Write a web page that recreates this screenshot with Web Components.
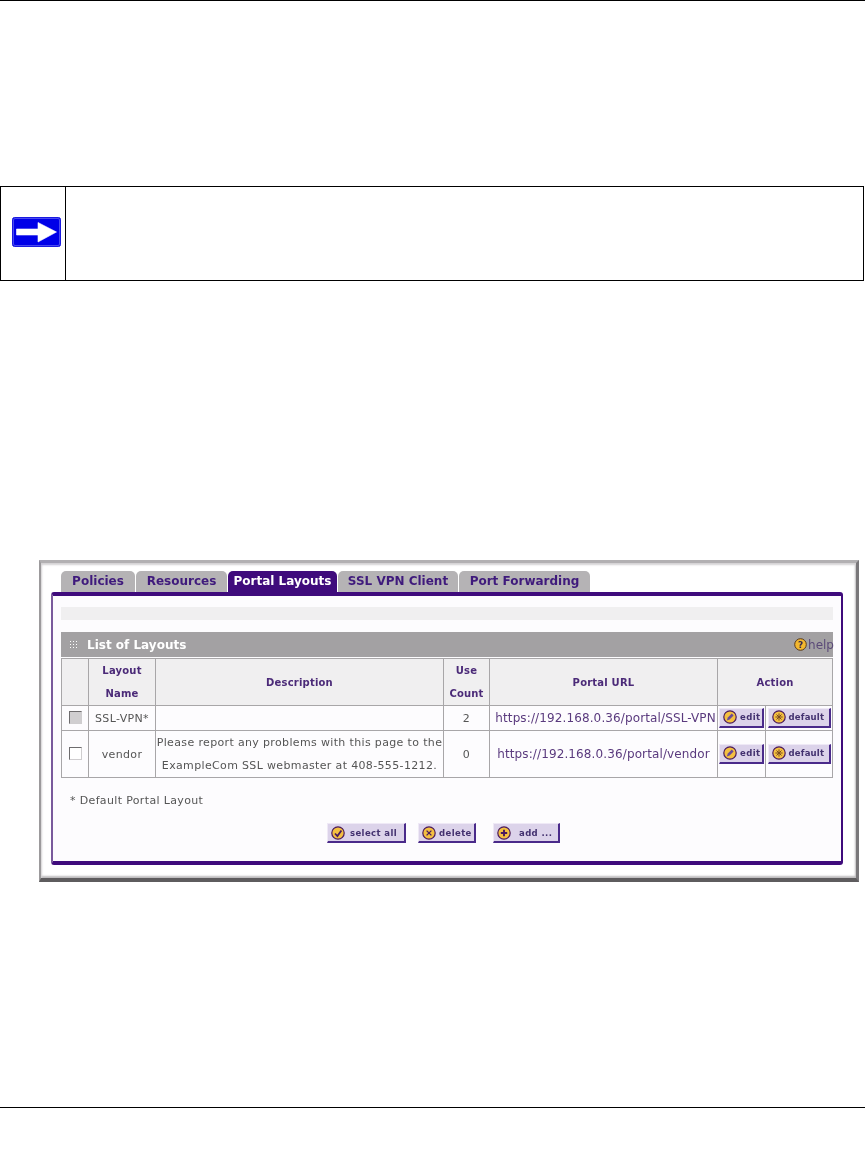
<!DOCTYPE html>
<html>
<head>
<meta charset="utf-8">
<title>Portal Layouts</title>
<style>
  html, body { margin: 0; padding: 0; background: #fff; }
</style>
</head>
<body>
<manual-page>
  <note-box></note-box>
  <vpn-window>
    <vpn-tab slot="tabs" style="width:74px">Policies</vpn-tab>
    <vpn-tab slot="tabs" style="width:91px">Resources</vpn-tab>
    <vpn-tab slot="tabs" style="width:109px" active>Portal Layouts</vpn-tab>
    <vpn-tab slot="tabs" style="width:120px">SSL VPN Client</vpn-tab>
    <vpn-tab slot="tabs" style="width:131px">Port Forwarding</vpn-tab>
    <layout-table></layout-table>
  </vpn-window>
</manual-page>

<script>
const ICONS = {
  check: `<path d="M4 7.5l2.4 2.6L10.4 4.4" fill="none" stroke="#4a1a5e" stroke-width="1.8"/>`,
  cross: `<path d="M4.6 4.6l4.8 4.8M9.4 4.6l-4.8 4.8" fill="none" stroke="#4a1a5e" stroke-width="1.3"/>`,
  plus: `<path d="M7 3.8v6.4M3.8 7h6.4" fill="none" stroke="#4a1a5e" stroke-width="1.9"/>`,
  pencil: `<path d="M3.8 10.4l1-2.8 4-4 1.8 1.8-4 4z" fill="#6a4a96"/>`,
  star: `<path d="M7 3.4v7.2M3.4 7h7.2M4.5 4.5l5 5M9.5 4.5l-5 5" fill="none" stroke="#7a4a20" stroke-width="1"/>`,
};

class ManualPage extends HTMLElement {
  constructor() {
    super();
    const shadow = this.attachShadow({ mode: "open" });
    shadow.innerHTML = `
      <style>
        :host { display: block; width: 865px; height: 1170px; overflow: hidden; background: #fff; }
        .top { height: 1px; background: #000; }
        .body { height: 1106px; padding-top: 185px; box-sizing: border-box; }
        .rule { height: 1px; background: #000; }
        ::slotted(vpn-window) { margin: 279px 0 0 39px; }
      </style>
      <div class="top"></div>
      <div class="body"><slot></slot></div>
      <div class="rule"></div>
    `;
  }
}

class NoteBox extends HTMLElement {
  constructor() {
    super();
    const shadow = this.attachShadow({ mode: "open" });
    shadow.innerHTML = `
      <style>
        :host { display: flex; width: 864px; height: 95px; box-sizing: border-box; border: 1px solid #000; }
        .icon { width: 65px; border-right: 1px solid #000; display: flex; align-items: center; padding-left: 11px; padding-bottom: 3px; box-sizing: border-box; }
        svg { display: block; }
      </style>
      <div class="icon">
        <svg width="49" height="30" viewBox="0 0 49 30">
          <rect x="0.5" y="0.5" width="48" height="29" rx="2" fill="#0000e8" stroke="#1a1ae0"/>
          <rect x="1.5" y="1.5" width="46" height="27" rx="1.5" fill="none" stroke="#6a6af4" stroke-width="0.7"/>
          <path d="M4.5 12H26V5.5L44.5 15 26 25V18H4.5z" fill="#fff" stroke="#fff" stroke-width="0.6" stroke-linejoin="round"/>
        </svg>
      </div>
    `;
  }
}

class VpnWindow extends HTMLElement {
  constructor() {
    super();
    const shadow = this.attachShadow({ mode: "open" });
    shadow.innerHTML = `
      <style>
        :host {
          display: block; width: 820px; height: 322px; box-sizing: border-box;
          padding: 8px 13px 13px 10px;
          border-style: solid; border-width: 3px 3px 4px 2px;
          border-color: #b2b0b2 #79777a #5e5c5e #9c9a9c;
          box-shadow: inset 1px 2px 2px #d4d2d4, inset -1px -2px 2px #bdbbbd;
          background: #fff;
          font-family: "DejaVu Sans", Verdana, sans-serif;
          filter: blur(0.35px);
        }
        .tabs { display: flex; gap: 1px; padding-left: 10px; height: 21px; }
        .panel {
          height: 273px; box-sizing: border-box;
          border-top: 4px solid #3f0b7c; border-bottom: 4px solid #3f0b7c;
          border-left: 2px solid #7a5a9c; border-right: 2px solid #3f0b7c;
          border-radius: 3px;
          background: #fdfcfe;
          padding: 11px 8px 0;
        }
      </style>
      <div class="tabs"><slot name="tabs"></slot></div>
      <div class="panel"><slot></slot></div>
    `;
  }
}

class VpnTab extends HTMLElement {
  constructor() {
    super();
    const shadow = this.attachShadow({ mode: "open" });
    shadow.innerHTML = `
      <style>
        :host {
          display: block; height: 21px; box-sizing: border-box; text-align: center;
          border-radius: 5px 5px 0 0;
          background: #b5b3b5; color: #3f1a7c;
          font: bold 12px/20px "DejaVu Sans", Verdana, sans-serif;
          white-space: nowrap;
        }
        :host([active]) { background: #3f0b7c; color: #fff; }
      </style>
      <slot></slot>
    `;
  }
}

class VpnButton extends HTMLElement {
  constructor() {
    super();
    const shadow = this.attachShadow({ mode: "open" });
    const icon = ICONS[this.getAttribute("icon")] || "";
    shadow.innerHTML = `
      <style>
        :host {
          display: inline-flex; align-items: center; height: 20px; box-sizing: border-box;
          padding-left: 3px; gap: 3px;
          background: #dcd3ea; color: #43316f;
          border-right: 2px solid #4a2a8a; border-bottom: 2px solid #4a2a8a;
          border-top: 1px solid #efe9f6; border-left: 1px solid #efe9f6;
          font: bold 8.5px/16px "DejaVu Sans", Verdana, sans-serif;
          letter-spacing: 0.4px; white-space: nowrap;
        }
        svg { display: block; flex: none; }
      </style>
      <svg width="14" height="14" viewBox="0 0 14 14">
        <circle cx="7" cy="7" r="6.2" fill="#f4c040" stroke="#4a1a5e" stroke-width="1.2"/>
        ${icon}
      </svg>
      <slot></slot>
    `;
  }
}

class LayoutTable extends HTMLElement {
  constructor() {
    super();
    const shadow = this.attachShadow({ mode: "open" });
    shadow.innerHTML = `
      <style>
        :host { display: block; color: #555; font: 11px "DejaVu Sans", Verdana, sans-serif; letter-spacing: 0.35px; }
        .msg { height: 13px; background: #f0eff0; margin-bottom: 12px; }
        .bar {
          height: 25px; display: flex; align-items: center; background: #a3a1a3; color: #fff;
          font: bold 12px "DejaVu Sans", Verdana, sans-serif; letter-spacing: 0; padding-left: 8px; margin-bottom: 1px;
        }
        .grip { width: 9px; height: 9px; margin-right: 9px; flex: none;
          background: radial-gradient(circle, #fff 0.8px, transparent 0.9px) 0 0 / 3px 3px; }
        .help { margin-left: auto; display: flex; align-items: center; gap: 1px; color: #5b4a78; font: 12px "DejaVu Sans", Verdana, sans-serif; margin-right: -1px; }
        .help svg { display: block; }
        table { border-collapse: collapse; table-layout: fixed; width: 771px; }
        th, td { border: 1px solid #a8a6a8; padding: 0; text-align: center; }
        th { background: #f0eff0; color: #4b2a78; font-size: 10px; font-weight: bold; line-height: 23px; height: 46px; letter-spacing: 0.2px; }
        td { line-height: 23px; }
        tr.r1 td { height: 24px; }
        tr.r2 td { height: 46px; }
        .url { color: #5a3a7e; font-size: 12px; letter-spacing: 0.12px; white-space: nowrap; }
        .url.shift { padding-left: 4px; }
        .desc { white-space: nowrap; }
        .box { display: block; width: 11px; height: 11px; margin: -1px auto 0; background: #fff;
          border: 1px solid; border-color: #6e6c6e #cfcdcf #cfcdcf #6e6c6e; }
        .box.off { background: #d0ced0; }
        .act { display: flex; justify-content: center; margin-top: -1px; }
        .tight { letter-spacing: 0.2px; }
        .foot { margin-top: 16px; height: 14px; line-height: 14px; padding-left: 9px; }
        .btns { display: flex; justify-content: center; gap: 12px; margin-top: 15px; padding-right: 7px; }
        .gap-add { margin-left: 5px; }
      </style>
      <div class="msg"></div>
      <div class="bar">
        <span class="grip"></span>List of Layouts
        <span class="help">
          <svg width="13" height="13" viewBox="0 0 13 13">
            <circle cx="6.5" cy="6.5" r="5.8" fill="#f4b82e" stroke="#5a3a1a"/>
            <text x="6.5" y="10" text-anchor="middle" font-size="9" font-weight="bold" fill="#3a2a4a" font-family="DejaVu Sans">?</text>
          </svg>help
        </span>
      </div>
      <table>
        <colgroup><col style="width:27px"><col style="width:67px"><col style="width:288px"><col style="width:46px"><col style="width:228px"><col style="width:48px"><col style="width:67px"></colgroup>
        <tr><th></th><th>Layout<br>Name</th><th>Description</th><th>Use<br>Count</th><th>Portal URL</th><th colspan="2">Action</th></tr>
        <tr class="r1">
          <td><span class="box off"></span></td><td>SSL-VPN*</td><td></td><td>2</td>
          <td class="url shift">https://192.168.0.36/portal/SSL-VPN</td>
          <td><div class="act"><vpn-button icon="pencil" style="width:45px">edit</vpn-button></div></td>
          <td><div class="act"><vpn-button class="tight" icon="star" style="width:63px">default</vpn-button></div></td>
        </tr>
        <tr class="r2">
          <td><span class="box"></span></td><td>vendor</td>
          <td class="desc">Please report any problems with this page to the<br>ExampleCom SSL webmaster at 408-555-1212.</td>
          <td>0</td>
          <td class="url">https://192.168.0.36/portal/vendor</td>
          <td><div class="act"><vpn-button icon="pencil" style="width:45px">edit</vpn-button></div></td>
          <td><div class="act"><vpn-button class="tight" icon="star" style="width:63px">default</vpn-button></div></td>
        </tr>
      </table>
      <div class="foot">* Default Portal Layout</div>
      <div class="btns">
        <vpn-button icon="check" style="width:79px;gap:5px">select all</vpn-button>
        <vpn-button icon="cross" style="width:58px">delete</vpn-button>
        <vpn-button class="gap-add" icon="plus" style="width:67px;gap:8px">add ...</vpn-button>
      </div>
    `;
  }
}

customElements.define("vpn-button", VpnButton);
customElements.define("vpn-tab", VpnTab);
customElements.define("vpn-window", VpnWindow);
customElements.define("layout-table", LayoutTable);
customElements.define("note-box", NoteBox);
customElements.define("manual-page", ManualPage);
</script>
</body>
</html>
